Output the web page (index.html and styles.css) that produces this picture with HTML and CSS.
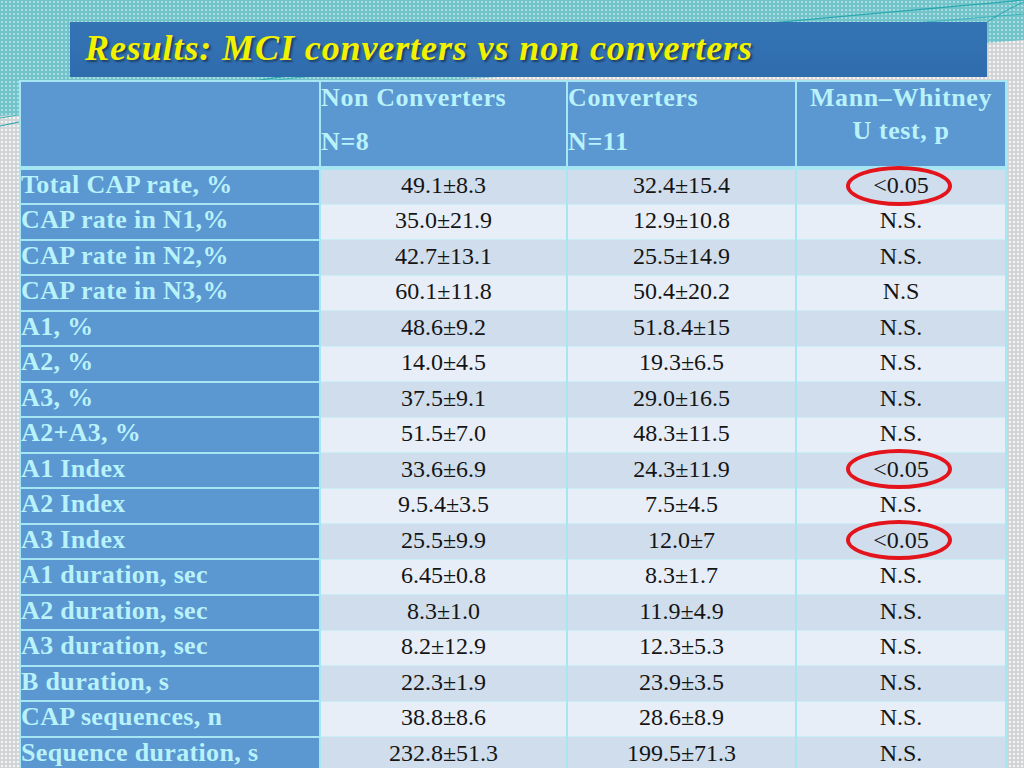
FILE: index.html
```html
<!DOCTYPE html>
<html>
<head>
<meta charset="utf-8">
<link rel="stylesheet" href="styles.css">
</head>
<body>
<div class="slide">
  <svg class="backdrop" width="1024" height="768" viewBox="0 0 1024 768" aria-hidden="true">
    <defs>
      <pattern id="dotsGray" width="4" height="4" patternUnits="userSpaceOnUse">
        <rect width="4" height="4" fill="#d2d4d6"/>
        <rect x="1" y="1" width="2" height="2" fill="#f4f5f6"/>
      </pattern>
      <pattern id="dotsTeal" width="4" height="4" patternUnits="userSpaceOnUse">
        <rect width="4" height="4" fill="#72c3ca"/>
        <rect x="1" y="1" width="2" height="2" fill="#a9dde0"/>
      </pattern>
    </defs>
    <rect width="1024" height="768" fill="url(#dotsGray)"/>
    <path d="M0 0 H1024 V40 C760 60 420 80 0 116 Z" fill="url(#dotsTeal)"/>
    <path d="M0 126 C300 60 700 30 1024 0" stroke="#2aa8b0" stroke-width="1.2" fill="none"/>
    <path d="M0 118 C280 70 650 45 1024 14" stroke="#3cb4bb" stroke-width="1" fill="none"/>
    <path d="M960 40 C990 20 1005 10 1024 2" stroke="#2aa8b0" stroke-width="1" fill="none"/>
  </svg>

  <header class="title-bar">
    <h1 class="title">Results: MCI converters vs non converters</h1>
  </header>

  <table class="results">
    <colgroup>
      <col class="c-label"><col class="c-non"><col class="c-conv"><col class="c-test">
    </colgroup>
    <thead>
      <tr>
        <th class="h-blank"></th>
        <th class="h-left"><div class="h-line">Non Converters</div><div class="h-line h-n">N=8</div></th>
        <th class="h-left"><div class="h-line">Converters</div><div class="h-line h-n">N=11</div></th>
        <th class="h-center"><div class="h-line">Mann–Whitney</div><div class="h-line">U test, p</div></th>
      </tr>
    </thead>
    <tbody>
      <tr><td class="label">Total CAP rate, %</td><td>49.1±8.3</td><td>32.4±15.4</td><td class="sig"><span class="ring"></span>&lt;0.05</td></tr>
      <tr><td class="label">CAP rate in N1,%</td><td>35.0±21.9</td><td>12.9±10.8</td><td>N.S.</td></tr>
      <tr><td class="label">CAP rate in N2,%</td><td>42.7±13.1</td><td>25.5±14.9</td><td>N.S.</td></tr>
      <tr><td class="label">CAP rate in N3,%</td><td>60.1±11.8</td><td>50.4±20.2</td><td>N.S</td></tr>
      <tr><td class="label">A1, %</td><td>48.6±9.2</td><td>51.8.4±15</td><td>N.S.</td></tr>
      <tr><td class="label">A2, %</td><td>14.0±4.5</td><td>19.3±6.5</td><td>N.S.</td></tr>
      <tr><td class="label">A3, %</td><td>37.5±9.1</td><td>29.0±16.5</td><td>N.S.</td></tr>
      <tr><td class="label">A2+A3, %</td><td>51.5±7.0</td><td>48.3±11.5</td><td>N.S.</td></tr>
      <tr><td class="label">A1 Index</td><td>33.6±6.9</td><td>24.3±11.9</td><td class="sig"><span class="ring"></span>&lt;0.05</td></tr>
      <tr><td class="label">A2 Index</td><td>9.5.4±3.5</td><td>7.5±4.5</td><td>N.S.</td></tr>
      <tr><td class="label">A3 Index</td><td>25.5±9.9</td><td>12.0±7</td><td class="sig"><span class="ring"></span>&lt;0.05</td></tr>
      <tr><td class="label">A1 duration, sec</td><td>6.45±0.8</td><td>8.3±1.7</td><td>N.S.</td></tr>
      <tr><td class="label">A2 duration, sec</td><td>8.3±1.0</td><td>11.9±4.9</td><td>N.S.</td></tr>
      <tr><td class="label">A3 duration, sec</td><td>8.2±12.9</td><td>12.3±5.3</td><td>N.S.</td></tr>
      <tr><td class="label">B duration, s</td><td>22.3±1.9</td><td>23.9±3.5</td><td>N.S.</td></tr>
      <tr><td class="label">CAP sequences, n</td><td>38.8±8.6</td><td>28.6±8.9</td><td>N.S.</td></tr>
      <tr><td class="label">Sequence duration, s</td><td>232.8±51.3</td><td>199.5±71.3</td><td>N.S.</td></tr>
    </tbody>
  </table>
</div>
</body>
</html>
```

FILE: styles.css
```css
html, body {
  margin: 0;
  padding: 0;
}
body {
  width: 1024px;
  height: 768px;
  overflow: hidden;
  background: #d2d4d6;
}
.slide {
  position: relative;
  width: 1024px;
  height: 768px;
  overflow: hidden;
  padding-top: 22px;
  box-sizing: border-box;
}
.backdrop {
  position: absolute;
  left: 0;
  top: 0;
  z-index: 0;
}
.title-bar {
  position: relative;
  z-index: 1;
  margin-left: 70px;
  width: 917px;
  height: 55px;
  background: linear-gradient(#3474b4, #2f6cae);
  box-sizing: border-box;
  padding-left: 15px;
}
.title {
  margin: 0;
  font-family: "Liberation Serif", serif;
  font-style: italic;
  font-weight: bold;
  font-size: 36px;
  line-height: 53px;
  color: #f2f200;
  text-shadow: 2px 2px 2px #1d3f66;
  letter-spacing: 0.9px;
}
.results {
  position: relative;
  z-index: 1;
  margin-left: 19px;
  margin-top: 3px;
  width: 986px;
  table-layout: fixed;
  border-collapse: collapse;
  font-family: "Liberation Serif", serif;
}
.c-label { width: 300px; }
.c-non { width: 247px; }
.c-conv { width: 229px; }
.c-test { width: 210px; }

.results th {
  background: #5b97d1;
  color: #b8f2fa;
  font-weight: bold;
  font-size: 26px;
  letter-spacing: 0.6px;
  height: 84px;
  padding: 0;
  vertical-align: top;
  border: 2px solid #a6e7f3;
  border-bottom: 4px solid #a6e7f3;
}
.h-left { text-align: left; }
.h-center { text-align: center; }
.h-line {
  line-height: 33px;
}
.results th .h-line:first-child {
  margin-top: -1px;
}
.h-n {
  margin-top: 11px;
}

.results td {
  height: 35.5px;
  padding: 0 0 3px 0;
  box-sizing: border-box;
  font-size: 24px;
  line-height: 30px;
  text-align: center;
  color: #151515;
  border-top: 1px solid #c8eef6;
  border-left: 2px solid #a6e7f3;
  border-right: 2px solid #a6e7f3;
}
.results tbody tr:nth-child(odd) td { background: #d0ddec; }
.results tbody tr:nth-child(even) td { background: #e8eef7; }
.results tbody tr td.label {
  background: #5b97d1;
  color: #b8f2fa;
  font-weight: bold;
  font-size: 26px;
  letter-spacing: 0.35px;
  text-align: left;
  padding-left: 0;
  border-top: 2px solid #a6e7f3;
}
.sig {
  position: relative;
}
.ring {
  position: absolute;
  left: 50%;
  top: 50%;
  width: 106px;
  height: 40px;
  margin-left: -55px;
  margin-top: -21px;
  border: 4px solid #e3141c;
  border-radius: 50%;
  box-sizing: border-box;
}
```
